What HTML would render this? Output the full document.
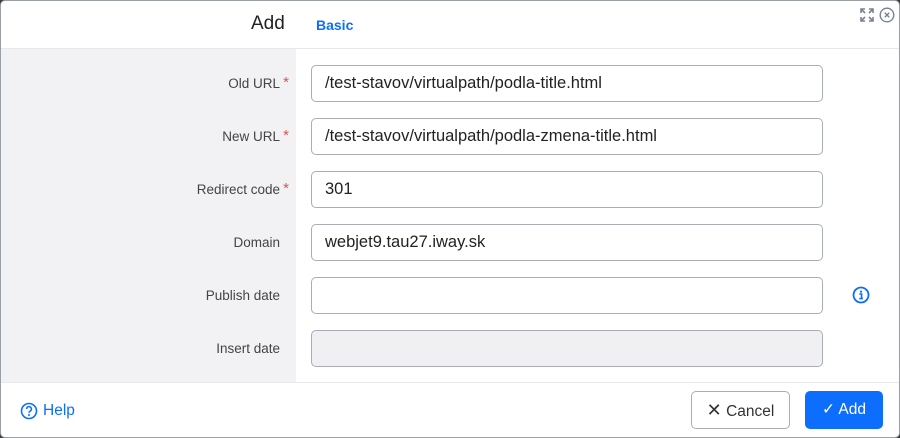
<!DOCTYPE html>
<html><head><style>
body{margin:0;width:900px;height:438px;background:#3a3a3a;font-family:"Liberation Sans",sans-serif;overflow:hidden;position:relative}
.dlg{position:absolute;left:0;top:0;width:898px;height:436px;background:#fff;border:1px solid #9aa0a8;border-radius:5px;overflow:hidden}
.hdr{position:absolute;left:0;top:0;width:898px;height:47px;border-bottom:1px solid #e6e8ec}
.title{position:absolute;left:250px;top:12px;font-size:19px;color:#222}
.tab{position:absolute;left:315px;top:16px;font-size:14px;font-weight:bold;color:#0d6efd}
.left{position:absolute;left:0;top:48px;width:295px;height:333px;background:#f2f2f4}
.foot{position:absolute;left:0;top:381px;width:898px;border-top:1px solid #e6e8ec;height:56px}
.lbl{position:absolute;right:619px;font-size:13.5px;color:#444;text-align:right}
.lbl i{color:#e05050;font-style:normal;position:absolute;right:-9px;top:-2px;font-size:15px}
.inp{position:absolute;left:310px;width:497px;height:35px;border:1px solid #a8adb8;border-radius:5px;font-size:16.5px;color:#222;line-height:35px;padding-left:13px}
.btn{position:absolute;top:390px;height:36px;border-radius:5px;font-size:15.5px;line-height:36px;text-align:center}
</style></head><body>
<div class="dlg">
<div class="hdr"><div class="title">Add</div><div class="tab">Basic</div>
<svg style="position:absolute;left:858px;top:6px" width="16" height="16" viewBox="0 0 16 16" fill="none" stroke="#7a8290" stroke-width="1.6"><path d="M2 6V2h4M2 2l4 4M10 2h4v4M14 2l-4 4M2 10v4h4M2 14l4-4M14 10v4h-4M14 14l-4-4"/></svg>
<svg style="position:absolute;left:878px;top:6px" width="16" height="16" viewBox="0 0 16 16" fill="none" stroke="#7a8290" stroke-width="1.4"><circle cx="8" cy="8" r="6.8"/><path d="M5.8 5.8l4.4 4.4M10.2 5.8l-4.4 4.4"/></svg>
</div>
<div class="left"></div>
<div class="lbl" style="top:75px">Old URL<i>*</i></div>
<div class="lbl" style="top:128px">New URL<i>*</i></div>
<div class="lbl" style="top:181px">Redirect code<i>*</i></div>
<div class="lbl" style="top:234px">Domain</div>
<div class="lbl" style="top:287px">Publish date</div>
<div class="lbl" style="top:340px">Insert date</div>
<div class="inp" style="top:64px">/test-stavov/virtualpath/podla-title.html</div>
<div class="inp" style="top:117px">/test-stavov/virtualpath/podla-zmena-title.html</div>
<div class="inp" style="top:170px">301</div>
<div class="inp" style="top:223px">webjet9.tau27.iway.sk</div>
<div class="inp" style="top:276px"></div>
<div class="inp" style="top:329px;background:#f0f0f3"></div>
<svg style="position:absolute;left:851px;top:285px" width="18" height="18" viewBox="0 0 18 18"><circle cx="9" cy="9" r="7.5" fill="none" stroke="#0d6efd" stroke-width="1.8"/><circle cx="9" cy="5.6" r="1.1" fill="#0d6efd"/><path d="M7.3 8h2.3v4.5M7.3 12.6h3.6" stroke="#0d6efd" stroke-width="1.6" fill="none"/></svg>
<div class="foot"></div>
<svg style="position:absolute;left:19px;top:401px" width="18" height="18" viewBox="0 0 18 18"><circle cx="9" cy="9" r="7.5" fill="none" stroke="#0d6efd" stroke-width="1.6"/><path d="M6.6 7a2.4 2.4 0 1 1 3.4 2.2c-.7.4-1 .8-1 1.6" stroke="#0d6efd" stroke-width="1.6" fill="none"/><circle cx="9" cy="13" r="1" fill="#0d6efd"/></svg>
<div style="position:absolute;left:42px;top:401px;font-size:15.5px;color:#0d6efd">Help</div>
<div class="btn" style="left:690px;width:97px;border:1px solid #a8adb8;color:#333"><span style="font-size:18px">✕</span> Cancel</div>
<div class="btn" style="left:804px;width:78px;background:#0d6efd;color:#fff;height:38px;line-height:38px">✓ Add</div>
</div>
</body></html>
